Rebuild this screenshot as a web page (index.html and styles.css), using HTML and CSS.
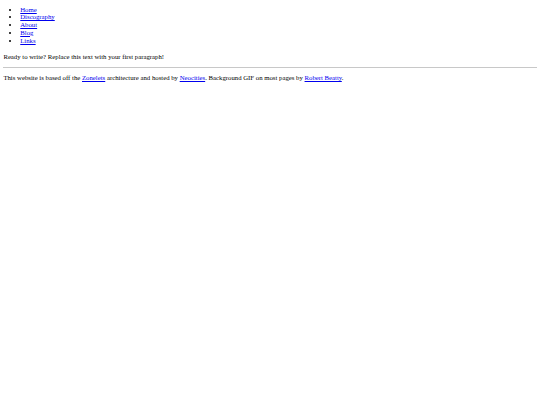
FILE: index.html
```html
<!DOCTYPE html>
<html>
<head>
<meta charset="utf-8">
<link rel="stylesheet" href="styles.css">
</head>
<body>
<ul class="nav">
<li><a href="#">Home</a></li>
<li><a href="#">Discography</a></li>
<li><a href="#">About</a></li>
<li><a href="#">Blog</a></li>
<li><a href="#">Links</a></li>
</ul>
<p class="text intro">Ready to write? Replace this text with your first paragraph!</p>
<hr class="rule">
<p class="text footer">This website is based off the <a href="#">Zonelets</a> architecture and hosted by <a href="#">Neocities</a>. Background GIF on most pages by <a href="#">Robert Beatty</a>.</p>
</body>
</html>
```
FILE: styles.css
```css
html {
  background: #fff;
}
body {
  margin: 0 3.375px;
  padding-top: 5.5px;
  font-family: "Liberation Serif", "Times New Roman", serif;
  font-size: 6.75px;
  line-height: 7.75px;
  color: #000;
}
a {
  color: #0000ee;
  text-decoration: underline;
  text-decoration-thickness: 1px;
  text-underline-offset: 1px;
}
.nav {
  margin: 0 0 8.25px;
  padding-left: 16.875px;
  list-style: disc;
}
.text {
  margin: 0;
}
.intro {
  margin-bottom: 6.75px;
}
.rule {
  margin: 0 0 6px;
  border: none;
  border-top: 1px solid #c8c8c8;
  height: 0;
}
.footer {
  line-height: 8px;
}
.footer a {
  text-decoration-thickness: 1.25px;
  text-underline-offset: 1.25px;
}
```
